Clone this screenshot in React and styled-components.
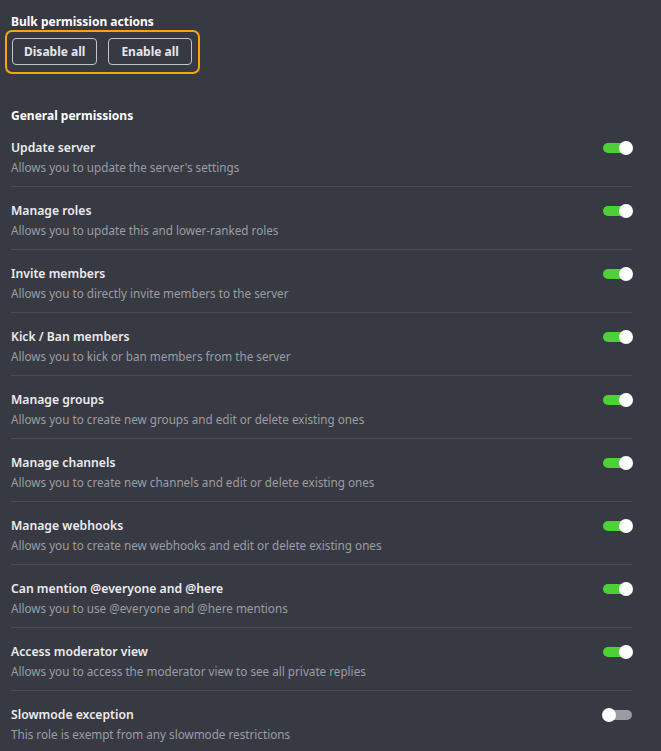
import React, { useState } from 'react';
import styled, { createGlobalStyle } from 'styled-components';

const GlobalStyle = createGlobalStyle`
  html, body {
    margin: 0;
    padding: 0;
    background: #383a43;
  }
  body {
    font-family: "Noto Sans", "Open Sans", sans-serif;
  }
`;

const PERMISSIONS = [
  { title: 'Update server', desc: "Allows you to update the server's settings", on: true },
  { title: 'Manage roles', desc: 'Allows you to update this and lower-ranked roles', on: true },
  { title: 'Invite members', desc: 'Allows you to directly invite members to the server', on: true },
  { title: 'Kick / Ban members', desc: 'Allows you to kick or ban members from the server', on: true },
  { title: 'Manage groups', desc: 'Allows you to create new groups and edit or delete existing ones', on: true },
  { title: 'Manage channels', desc: 'Allows you to create new channels and edit or delete existing ones', on: true },
  { title: 'Manage webhooks', desc: 'Allows you to create new webhooks and edit or delete existing ones', on: true },
  { title: 'Can mention @everyone and @here', desc: 'Allows you to use @everyone and @here mentions', on: true },
  { title: 'Access moderator view', desc: 'Allows you to access the moderator view to see all private replies', on: true },
  { title: 'Slowmode exception', desc: 'This role is exempt from any slowmode restrictions', on: false },
];

const App = () => {
  const [perms, setPerms] = useState(PERMISSIONS);

  const setAll = (value) => setPerms(perms.map(p => ({ ...p, on: value })));
  const flip = (i) => setPerms(perms.map((p, j) => (j === i ? { ...p, on: !p.on } : p)));

  return (
    <Page>
      <GlobalStyle />
      <Heading>Bulk permission actions</Heading>
      <BulkBox>
        <BulkButton onClick={() => setAll(false)}>Disable all</BulkButton>
        <BulkButton onClick={() => setAll(true)}>Enable all</BulkButton>
      </BulkBox>

      <SectionHeading>General permissions</SectionHeading>
      <List>
        {perms.map((p, i) => (
          <Row key={p.title}>
            <TextCol>
              <Title>{p.title}</Title>
              <Desc>{p.desc}</Desc>
            </TextCol>
            <Toggle $on={p.on} onClick={() => flip(i)} aria-pressed={p.on}>
              <Knob $on={p.on} />
            </Toggle>
          </Row>
        ))}
      </List>
    </Page>
  );
};

const Page = styled.div`
  padding: 14px 29px 0 11px;
  color: #ffffff;
`;

const Heading = styled.div`
  font-size: 12px;
  font-weight: 700;
  line-height: 16px;
  color: #ffffff;
`;

const SectionHeading = styled(Heading)`
  margin-top: 34px;
  margin-bottom: 14px;
`;

const BulkBox = styled.div`
  display: inline-flex;
  gap: 11px;
  margin-left: -6px;
  padding: 6px 6px 7px 5px;
  border: 2px solid #f6a50c;
  border-radius: 7px;
`;

const BulkButton = styled.button`
  font-family: inherit;
  font-size: 12px;
  font-weight: 700;
  color: #e6e6ea;
  background: transparent;
  border: 1px solid #c4c5ca;
  border-radius: 4px;
  height: 27px;
  padding: 0 11px;
  cursor: pointer;

  & + & {
    padding: 0 12px;
  }
`;

const List = styled.div`
  display: flex;
  flex-direction: column;
`;

const Row = styled.div`
  display: flex;
  justify-content: space-between;
  align-items: flex-start;
  padding: 0 0 9px;
  margin-bottom: 14px;
  border-bottom: 1px solid #4b4d56;

  &:last-child {
    border-bottom: none;
  }
`;

const TextCol = styled.div`
  display: flex;
  flex-direction: column;
`;

const Title = styled.div`
  font-size: 12.2px;
  font-weight: 600;
  line-height: 20px;
  color: #ececef;
`;

const Desc = styled.div`
  margin-top: -1px;
  font-size: 11.7px;
  line-height: 20px;
  color: #9b9da4;
`;

const Toggle = styled.button`
  position: relative;
  width: 29px;
  height: 10px;
  margin-top: 5px;
  padding: 0;
  border: none;
  border-radius: 5px;
  background: ${p => (p.$on ? '#4cd137' : '#9a9ba3')};
  cursor: pointer;
  flex-shrink: 0;
`;

const Knob = styled.span`
  position: absolute;
  top: -2px;
  left: ${p => (p.$on ? '16px' : '-1px')};
  width: 14px;
  height: 14px;
  border-radius: 50%;
  background: #ffffff;
`;

export default App;
